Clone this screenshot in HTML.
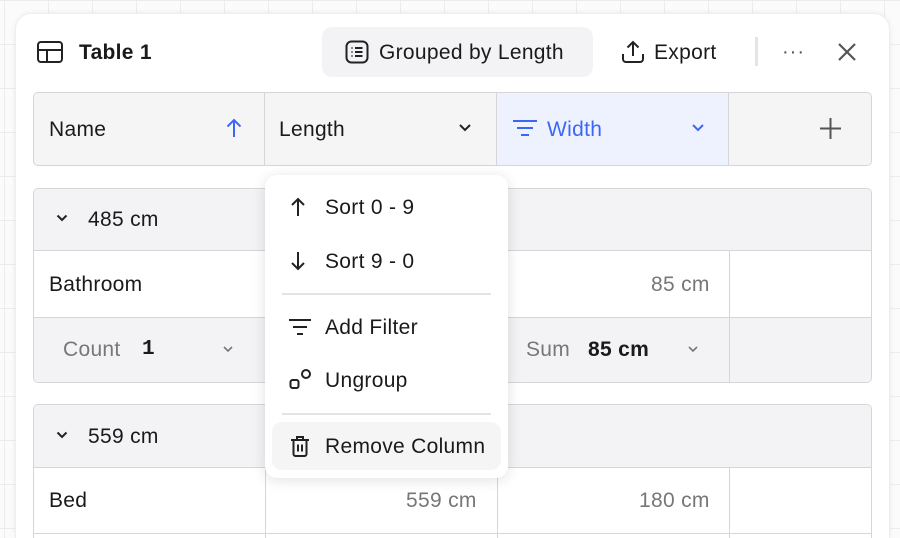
<!DOCTYPE html>
<html style="width:900px;height:538px;overflow:hidden"><head><meta charset="utf-8"><style>
*{box-sizing:border-box;margin:0;padding:0}
body{width:900px;height:538px;overflow:hidden;font-family:"Liberation Sans",sans-serif;color:#1a1a1a;
background-color:#fbfbfb;background-image:linear-gradient(#ececec 1px,transparent 1px),linear-gradient(90deg,#ececec 1px,transparent 1px);background-size:44px 44px;background-position:4px 0px;position:relative}
.card{position:absolute;left:15px;top:13px;width:875px;height:525px;background:#fff;border-radius:16px 16px 0 0;box-shadow:0 0 6px rgba(0,0,0,.06);border:1px solid #eee;border-bottom:none}
.abs{position:absolute}
.t{font-size:21px;letter-spacing:0.3px;white-space:nowrap}
.box{position:absolute;left:33px;width:839px;border:1.5px solid #d6d6d8;border-radius:5px;overflow:hidden;background:#fff}
.cell{position:absolute;top:0;bottom:0;border-right:1.5px solid #d6d6d8}
.menu{position:absolute;left:265px;top:175px;width:243px;height:303px;background:#fff;border-radius:12px;box-shadow:0 2px 14px rgba(0,0,0,.12)}
.mi{position:absolute;left:60px;font-size:21px;letter-spacing:0.3px;white-space:nowrap}
.sep{position:absolute;left:17px;width:209px;height:1.5px;background:#e4e4e4}
</style></head><body>
<div class="card"></div>
<svg class="abs" style="left:37px;top:40px" width="26" height="24" viewBox="0 0 26 24" fill="none" stroke="#222" stroke-width="2"><rect x="1" y="2" width="24" height="20" rx="3"/><path d="M1 10H25M10 10V22"/></svg>
<div class="abs t" style="left:79px;top:41px;font-weight:bold">Table 1</div>
<div class="abs" style="left:322px;top:27px;width:271px;height:50px;background:#f3f3f5;border-radius:10px"></div>
<svg class="abs" style="left:345px;top:40px" width="24" height="24" viewBox="0 0 24 24" fill="none" stroke="#222" stroke-width="2"><rect x="1.5" y="1.5" width="21" height="21" rx="5"/><path d="M6.5 8h1M10 8h7.5M6.5 12h1M10 12h7.5M6.5 16h1M10 16h7.5"/></svg>
<div class="abs t" style="left:379px;top:41px">Grouped by Length</div>
<svg class="abs" style="left:621px;top:40px" width="24" height="24" viewBox="0 0 24 24" fill="none" stroke="#222" stroke-width="2"><path d="M12 2v14M6.5 7.5L12 2l5.5 5.5M2 14v5a3 3 0 0 0 3 3h14a3 3 0 0 0 3-3v-5"/></svg>
<div class="abs t" style="left:654px;top:41px">Export</div>
<div class="abs" style="left:755px;top:37px;width:3px;height:29px;background:#e4e4e4"></div>
<div class="abs" style="left:782px;top:41px;font-size:20px;color:#555;letter-spacing:1px">···</div>
<svg class="abs" style="left:837px;top:42px" width="20" height="20" viewBox="0 0 20 20" stroke="#555" stroke-width="2.2"><path d="M2 2L18 18M18 2L2 18"/></svg>

<div class="box" style="top:92px;height:74px;background:#f5f5f6">
 <div class="cell" style="left:0;width:231px"></div>
 <div class="cell" style="left:231px;width:232px"></div>
 <div class="cell" style="left:463px;width:232px;background:#edf2fe"></div>
</div>
<div class="abs t" style="left:49px;top:118px">Name</div>
<svg class="abs" style="left:225px;top:118px" width="18" height="20" viewBox="0 0 18 20" fill="none" stroke="#3e66f5" stroke-width="2"><path d="M9 19V2M2.5 8.5L9 2l6.5 6.5"/></svg>
<div class="abs t" style="left:279px;top:118px">Length</div>
<svg class="abs" style="left:458px;top:123px" width="14" height="10" viewBox="0 0 14 10" fill="none" stroke="#222" stroke-width="2"><path d="M2 2l5 5 5-5"/></svg>
<svg class="abs" style="left:512px;top:118px" width="26" height="20" viewBox="0 0 26 20" fill="none" stroke="#3e66f5" stroke-width="2"><path d="M1 3h24M5 10h16M9 17h8"/></svg>
<div class="abs t" style="left:547px;top:118px;color:#3e66f5">Width</div>
<svg class="abs" style="left:691px;top:123px" width="14" height="10" viewBox="0 0 14 10" fill="none" stroke="#3e66f5" stroke-width="2"><path d="M2 2l5 5 5-5"/></svg>
<svg class="abs" style="left:820px;top:118px" width="21" height="21" viewBox="0 0 21 21" stroke="#555" stroke-width="2"><path d="M10.5 0v21M0 10.5h21"/></svg>

<div class="box" style="top:188px;height:195px">
 <div class="abs" style="left:0;right:0;top:0;height:62px;background:#f3f3f5;border-bottom:1.5px solid #d6d6d8"></div>
 <div class="abs" style="left:0;right:0;top:128px;bottom:0;background:#f3f3f5;border-top:1.5px solid #d6d6d8"></div>
 <div class="abs" style="left:231px;top:62px;bottom:0;border-left:1.5px solid #d6d6d8"></div>
 <div class="abs" style="left:463px;top:62px;bottom:0;border-left:1.5px solid #d6d6d8"></div>
 <div class="abs" style="left:695px;top:62px;bottom:0;border-left:1.5px solid #d6d6d8"></div>
</div>
<svg class="abs" style="left:56px;top:214px" width="12" height="9" viewBox="0 0 12 9" fill="none" stroke="#222" stroke-width="2"><path d="M1.5 1.5l4.5 4.5 4.5-4.5"/></svg>
<div class="abs t" style="left:88px;top:208px">485 cm</div>
<div class="abs t" style="left:49px;top:273px">Bathroom</div>
<div class="abs t" style="left:651px;top:273px;color:#777">85 cm</div>
<div class="abs t" style="left:63px;top:338px;color:#777">Count</div>
<div class="abs t" style="left:142px;top:338px;font-weight:bold;font-family:'Liberation Mono',monospace">1</div>
<svg class="abs" style="left:222px;top:345px" width="12" height="8" viewBox="0 0 12 8" fill="none" stroke="#777" stroke-width="1.6"><path d="M2 2l4 4 4-4"/></svg>
<div class="abs t" style="left:526px;top:338px;color:#777">Sum</div>
<div class="abs t" style="left:588px;top:338px;font-weight:bold">85 cm</div>
<svg class="abs" style="left:687px;top:345px" width="12" height="8" viewBox="0 0 12 8" fill="none" stroke="#777" stroke-width="1.6"><path d="M2 2l4 4 4-4"/></svg>

<div class="box" style="top:404px;height:134px;border-bottom:none;border-radius:5px 5px 0 0">
 <div class="abs" style="left:0;right:0;top:0;height:63px;background:#f3f3f5;border-bottom:1.5px solid #d6d6d8"></div>
 <div class="abs" style="left:0;right:0;top:128px;bottom:0;border-top:1.5px solid #d6d6d8"></div>
 <div class="abs" style="left:231px;top:63px;bottom:0;border-left:1.5px solid #d6d6d8"></div>
 <div class="abs" style="left:463px;top:63px;bottom:0;border-left:1.5px solid #d6d6d8"></div>
 <div class="abs" style="left:695px;top:63px;bottom:0;border-left:1.5px solid #d6d6d8"></div>
</div>
<svg class="abs" style="left:56px;top:431px" width="12" height="9" viewBox="0 0 12 9" fill="none" stroke="#222" stroke-width="2"><path d="M1.5 1.5l4.5 4.5 4.5-4.5"/></svg>
<div class="abs t" style="left:88px;top:425px">559 cm</div>
<div class="abs t" style="left:49px;top:489px">Bed</div>
<div class="abs t" style="left:406px;top:489px;color:#777">559 cm</div>
<div class="abs t" style="left:639px;top:489px;color:#777">180 cm</div>

<div class="menu">
 <svg class="abs" style="left:25px;top:22px" width="16" height="20" viewBox="0 0 16 20" fill="none" stroke="#222" stroke-width="2"><path d="M8 19V2M2 8l6-6 6 6"/></svg>
 <div class="mi" style="top:21px">Sort 0 - 9</div>
 <svg class="abs" style="left:25px;top:76px" width="16" height="20" viewBox="0 0 16 20" fill="none" stroke="#222" stroke-width="2"><path d="M8 1v17M2 12l6 6 6-6"/></svg>
 <div class="mi" style="top:75px">Sort 9 - 0</div>
 <div class="sep" style="top:118px"></div>
 <svg class="abs" style="left:23px;top:143px" width="24" height="18" viewBox="0 0 24 18" fill="none" stroke="#222" stroke-width="2"><path d="M1 2h22M5 9h14M9 16h6"/></svg>
 <div class="mi" style="top:141px">Add Filter</div>
 <svg class="abs" style="left:24px;top:193px" width="24" height="22" viewBox="0 0 24 22" fill="none" stroke="#222" stroke-width="2"><rect x="1.5" y="12" width="8" height="8" rx="2"/><circle cx="17" cy="6" r="4"/></svg>
 <div class="mi" style="top:194px">Ungroup</div>
 <div class="sep" style="top:238px"></div>
 <div class="abs" style="left:7px;top:247px;width:229px;height:48px;background:#f5f5f6;border-radius:10px"></div>
 <svg class="abs" style="left:25px;top:260px" width="20" height="22" viewBox="0 0 20 22" fill="none" stroke="#222" stroke-width="2"><path d="M1 5h18M7 5V2h6v3M3.5 5v14a2 2 0 0 0 2 2h9a2 2 0 0 0 2-2V5M8 9.5v7M12 9.5v7"/></svg>
 <div class="mi" style="top:260px">Remove Column</div>
</div>
</body></html>
